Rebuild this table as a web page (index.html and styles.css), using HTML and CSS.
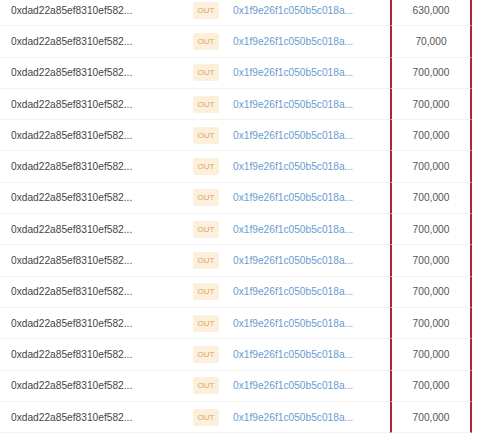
FILE: index.html
```html
<!DOCTYPE html>
<html lang="en">
<head>
    <meta charset="UTF-8">
    <meta name="viewport" content="width=device-width, initial-scale=1.0">
    <title>Transfers</title>
    <link rel="stylesheet" href="styles.css">
</head>
<body>
    <div class="tx-list" id="txList"></div>

    <script>
        const amounts = ['630,000', '70,000', '700,000', '700,000', '700,000', '700,000', '700,000',
                         '700,000', '700,000', '700,000', '700,000', '700,000', '700,000', '700,000'];
        const list = document.getElementById('txList');

        amounts.forEach(amount => {
            const row = document.createElement('div');
            row.className = 'tx-row';
            row.innerHTML = `
                <div class="cell from">0xdad22a85ef8310ef582...</div>
                <div class="cell dir"><span class="badge">OUT</span></div>
                <div class="cell to">0x1f9e26f1c050b5c018a...</div>
                <div class="cell amount">${amount}</div>
            `;
            list.appendChild(row);
        });
    </script>
</body>
</html>
```

FILE: styles.css
```css
* {
    margin: 0;
    padding: 0;
    box-sizing: border-box;
}

body {
    font-family: 'Liberation Sans', Arial, sans-serif;
    font-size: 10.2px;
    color: #444;
    background: white;
    overflow: hidden;
}

.tx-list {
    margin-top: -5px;
}

.tx-row {
    display: flex;
    align-items: stretch;
    height: 31.3px;
}

.cell {
    display: flex;
    align-items: center;
    border-bottom: 1px solid #f2f2f2;
}

.from {
    width: 185px;
    padding-left: 11px;
    color: #444;
}

.dir {
    width: 48px;
    padding-left: 8px;
}

.badge {
    display: inline-block;
    background: #fcf0dc;
    color: #d9a35f;
    font-size: 8px;
    line-height: 17px;
    width: 26px;
    text-align: center;
    border-radius: 2px;
}

.to {
    width: 157px;
    color: #6a9bd2;
}

.amount {
    width: 82px;
    justify-content: center;
    border-left: 2px solid #b0272a;
    border-right: 2px solid #b0272a;
    color: #555;
}
```
